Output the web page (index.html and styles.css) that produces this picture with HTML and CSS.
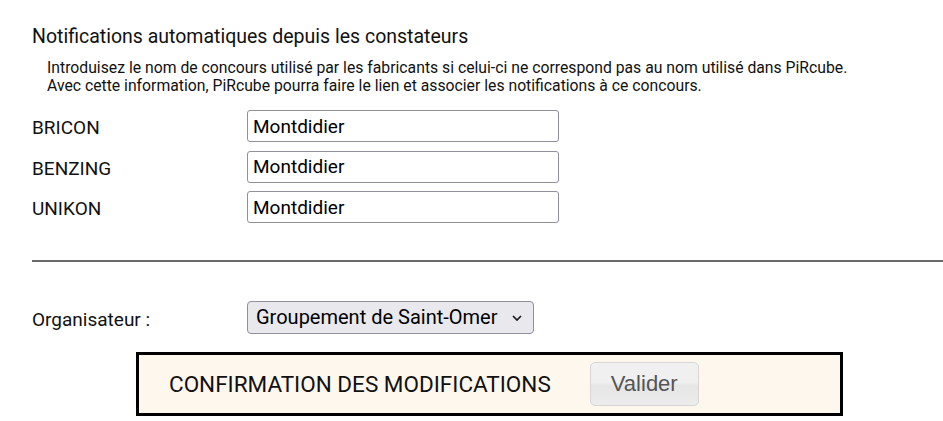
FILE: index.html
```html
<!DOCTYPE html>
<html lang="fr">
<head>
<meta charset="utf-8">
<title>Notifications automatiques</title>
<link rel="stylesheet" href="styles.css">
</head>
<body>
<div class="page">
  <h2 class="title">Notifications automatiques depuis les constateurs</h2>
  <p class="desc">Introduisez le nom de concours utilisé par les fabricants si celui-ci ne correspond pas au nom utilisé dans PiRcube.<br>Avec cette information, PiRcube pourra faire le lien et associer les notifications à ce concours.</p>
  <div class="fields">
    <label class="lbl" for="f1">BRICON</label>
    <input class="txt" id="f1" type="text" value="Montdidier">
    <label class="lbl" for="f2">BENZING</label>
    <input class="txt" id="f2" type="text" value="Montdidier">
    <label class="lbl" for="f3">UNIKON</label>
    <input class="txt" id="f3" type="text" value="Montdidier">
  </div>
  <hr class="sep">
  <div class="org">
    <label class="lbl" for="org">Organisateur :</label>
    <div class="selwrap">
      <select class="sel" id="org">
        <option>Groupement de Saint-Omer</option>
      </select>
      <svg class="chev" width="10" height="6" viewBox="0 0 10 6"><path d="M1 1 L5 5 L9 1" fill="none" stroke="#1a1a1a" stroke-width="1.7"/></svg>
    </div>
  </div>
  <div class="confirm">
    <span class="confirm-text">CONFIRMATION DES MODIFICATIONS</span>
    <button class="btn" type="button">Valider</button>
  </div>
</div>
</body>
</html>
```
FILE: styles.css
```css
html, body {
  margin: 0;
  padding: 0;
  background: #ffffff;
}
body {
  font-family: Roboto, "Liberation Sans", sans-serif;
  color: #111111;
}
.page {
  padding: 25px 0 0 32px;
}
.title {
  margin: 0;
  font-size: 19.5px;
  font-weight: 400;
  line-height: 23px;
  color: #111;
}
.desc {
  margin: 11px 0 0 15px;
  font-size: 15.75px;
  line-height: 17.5px;
  color: #111;
}
.fields {
  margin-top: 16px;
  display: grid;
  grid-template-columns: 215px 312px;
  grid-auto-rows: 40.5px;
  align-items: start;
}
.lbl {
  padding-top: 2px;
  font-size: 19px;
  line-height: 32px;
  color: #111;
}
.txt {
  box-sizing: border-box;
  width: 312px;
  height: 32px;
  margin: 0;
  padding: 0 5px;
  border: 1px solid #8f8f9d;
  border-radius: 3px;
  font-family: Roboto, "Liberation Sans", sans-serif;
  font-size: 19px;
  color: #000;
  background: #fff;
}
.sep {
  margin: 28px 0 0 0;
  width: 920px;
  height: 0;
  border: 0;
  border-top: 2px solid #6a6a6a;
}
.org {
  margin-top: 39px;
  height: 33px;
  display: flex;
  align-items: flex-start;
}
.org .lbl {
  width: 215px;
  padding-top: 3px;
  line-height: 32px;
}
.selwrap {
  position: relative;
}
.sel {
  -webkit-appearance: none;
  appearance: none;
  box-sizing: border-box;
  width: 287px;
  height: 33px;
  margin: 0;
  padding: 0 0 0 8px;
  border: 1px solid #8f8f9d;
  border-radius: 4px;
  background: #e9e9ed;
  font-family: Roboto, "Liberation Sans", sans-serif;
  font-size: 20px;
  color: #000;
}
.chev {
  position: absolute;
  right: 12px;
  top: 14px;
  pointer-events: none;
}
.confirm {
  box-sizing: border-box;
  margin: 18px 0 0 104px;
  width: 707px;
  height: 64px;
  border: 3px solid #000;
  background: #fef7ee;
  display: flex;
  align-items: center;
  padding-left: 30px;
  gap: 39px;
}
.confirm-text {
  font-size: 22.5px;
  color: #111;
}
.btn {
  box-sizing: border-box;
  width: 109px;
  height: 44px;
  margin: 0;
  border: 1px solid #d6d6d6;
  border-radius: 5px;
  background: linear-gradient(#f0f0f0 0%, #f0f0f0 45%, #e6e6e6 55%, #ececec 100%);
  font-family: "Liberation Sans", Arial, sans-serif;
  font-size: 22px;
  color: #555;
}
```
